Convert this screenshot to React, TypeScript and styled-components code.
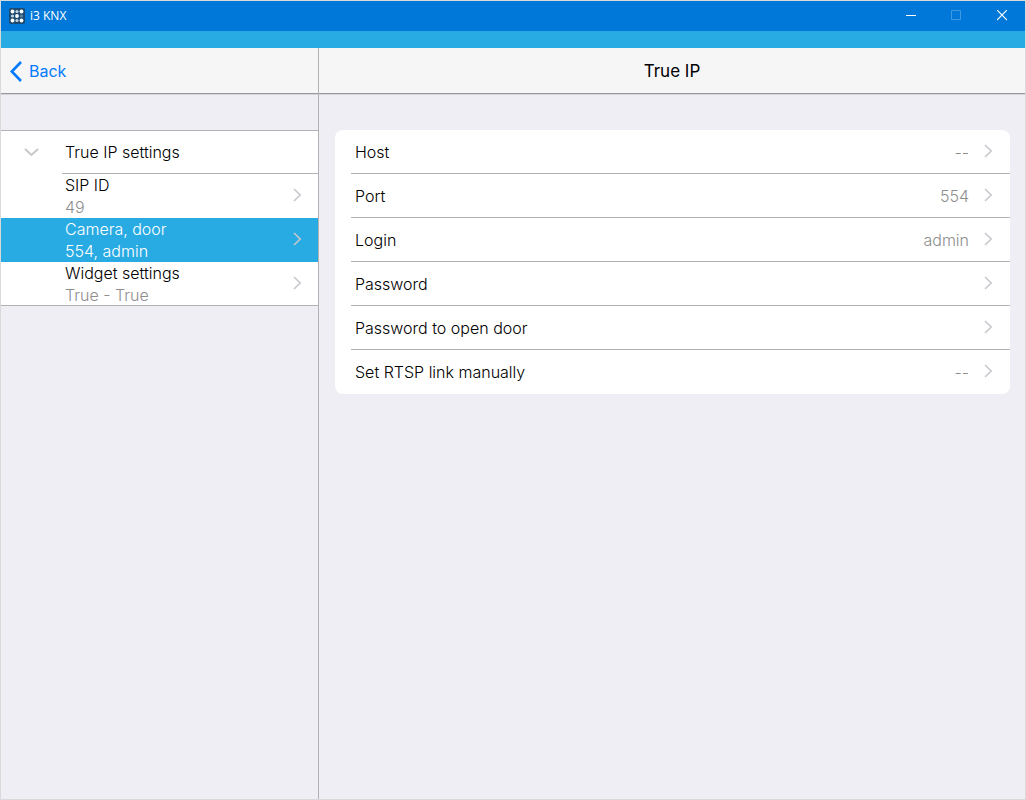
import React from "react";
import styled, { createGlobalStyle } from "styled-components";

const GlobalStyle = createGlobalStyle`
  *, *::before, *::after { box-sizing: border-box; }
  body { margin: 0; background: #efeef4; }
  button { font: inherit; color: inherit; border: 0; padding: 0; margin: 0; background: none; text-align: left; cursor: pointer; }
  ul { list-style: none; margin: 0; padding: 0; }
`;

const Window = styled.div`
  display: flex;
  flex-direction: column;
  min-height: 100vh;
  border: 1px solid #d9d9da;
  background: #efeef4;
  color: #000;
  font-family: Inter, "Liberation Sans", sans-serif;
  font-weight: 300;
  font-size: 16px;
  line-height: 22px;
`;

const TitleBar = styled.header`
  display: flex;
  align-items: center;
  height: 30px;
  padding-left: 8px;
  background: #0078d9;
  color: #fff;
`;

const AppName = styled.span`
  flex: 1;
  margin-left: 5px;
  font-family: "Open Sans", "Noto Sans", sans-serif;
  font-size: 12px;
  font-weight: 400;
  line-height: 16px;
`;

const WindowButton = styled.button`
  display: flex;
  align-items: center;
  justify-content: center;
  width: 46px;
  height: 30px;
  &:disabled { opacity: 0.25; cursor: default; }
`;

const StatusStrip = styled.div`
  height: 17px;
  background: #28aae3;
`;

const Body = styled.div`
  flex: 1;
  display: grid;
  grid-template-columns: 318px 1fr;
`;

const Sidebar = styled.nav`
  border-right: 1px solid #b2b2b4;
`;

const NavBar = styled.div<{ $centered?: boolean }>`
  display: flex;
  align-items: center;
  justify-content: ${(p) => (p.$centered ? "center" : "flex-start")};
  height: 46px;
  padding: 0 8px;
  border-bottom: 1px solid #999;
  box-shadow: 0 1px 0 #d5d5d8;
  background: #f6f6f6;
`;

const BackButton = styled.button`
  display: flex;
  align-items: center;
  gap: 6px;
  color: #007aff;
  font-weight: 400;
`;

const Title = styled.h1`
  margin: 0;
  font-size: 17px;
  font-weight: 400;
`;

const Group = styled.section`
  margin-top: 36px;
  border: solid #b2b2b4;
  border-width: 1px 0;
  background: #fff;
`;

const GroupHeader = styled.button`
  display: flex;
  align-items: center;
  width: 100%;
  height: 43px;
`;

const Disclosure = styled.span`
  display: flex;
  justify-content: center;
  width: 61px;
`;

const GroupName = styled.span`
  flex: 1;
  align-self: stretch;
  padding: 10px 3px;
  border-bottom: 1px solid #b2b2b4;
`;

const SideItem = styled.button<{ $selected: boolean }>`
  display: flex;
  align-items: center;
  width: 100%;
  height: 44px;
  padding: 0 15px 0 64px;
  background: ${(p) => (p.$selected ? "#28aae3" : "#fff")};
  color: ${(p) => (p.$selected ? "#fff" : "#000")};
  li:last-child > & { height: 43px; }
`;

const ItemText = styled.span`
  display: flex;
  flex: 1;
  flex-direction: column;
`;

const Detail = styled.span<{ $selected: boolean }>`
  color: ${(p) => (p.$selected ? "#fff" : "#8e8e8e")};
`;

const Card = styled.ul`
  margin: 36px 15px 0 16px;
  border-radius: 8px;
  background: #fff;
`;

const CardItem = styled.li`
  padding-left: 16px;
`;

const Row = styled.button`
  display: flex;
  align-items: center;
  width: 100%;
  height: 44px;
  padding: 0 16px 0 4px;
  border-bottom: 1px solid #b2b2b4;
  li:last-child > & { border-bottom-color: transparent; }
`;

const Label = styled.span`
  flex: 1;
`;

const Value = styled.span`
  margin-right: 14px;
  color: #8e8e8e;
`;

const Chevron = () => (
  <svg width="11" height="16" viewBox="0 0 11 16" fill="none" stroke="#c7c7cc" strokeWidth="1.6" aria-hidden="true">
    <path d="M2 1l6.2 6L2 13" />
  </svg>
);

const sideItems = [
  { name: "SIP ID", detail: "49" },
  { name: "Camera, door", detail: "554, admin", selected: true },
  { name: "Widget settings", detail: "True - True" },
];

const settings = [
  { label: "Host", value: "--" },
  { label: "Port", value: "554" },
  { label: "Login", value: "admin" },
  { label: "Password", value: "" },
  { label: "Password to open door", value: "" },
  { label: "Set RTSP link manually", value: "--" },
];

const AppLogo = () => (
  <svg width="16" height="16" viewBox="0 0 16 16" aria-hidden="true">
    <rect width="16" height="16" rx="2" fill="#1d4a70" />
    {[3.5, 8, 12.5].map((y, r) =>
      [3.5, 8, 12.5].map((x, c) => (
        <circle
          key={`${r}${c}`}
          cx={x}
          cy={y}
          r={(r + c) % 2 === 0 ? 1.9 : 1.6}
          fill={(r === 1 && c === 2) ? "#5f87a5" : (r + c) % 2 === 0 ? "#fff" : "#c3d3df"}
        />
      ))
    )}
  </svg>
);

export default function App() {
  return (
    <>
      <GlobalStyle />
      <Window>
        <TitleBar>
          <AppLogo />
          <AppName>i3 KNX</AppName>
          <WindowButton aria-label="Minimize">
            <svg width="12" height="12" stroke="#fff"><path d="M2 5.5h10" /></svg>
          </WindowButton>
          <WindowButton aria-label="Maximize" disabled>
            <svg width="10" height="12" stroke="#fff" fill="none"><path d="M.5.5h9v9h-9z" /></svg>
          </WindowButton>
          <WindowButton aria-label="Close">
            <svg width="10" height="12" stroke="#fff" strokeWidth="1.2"><path d="M0 0l10 10M10 0L0 10" /></svg>
          </WindowButton>
        </TitleBar>
        <StatusStrip />
        <Body>
          <Sidebar>
            <NavBar>
              <BackButton>
                <svg width="14" height="22" viewBox="0 0 14 22" fill="none" stroke="#007aff" strokeWidth="2.6" aria-hidden="true">
                  <path d="M12 2L2.8 11.5l9.2 9.5" />
                </svg>
                Back
              </BackButton>
            </NavBar>
            <Group>
              <GroupHeader aria-expanded="true">
                <Disclosure>
                  <svg width="15" height="9" viewBox="0 0 15 9" fill="none" stroke="#c7c7cc" strokeWidth="2" aria-hidden="true">
                    <path d="M1 1l6.5 6L14 1" />
                  </svg>
                </Disclosure>
                <GroupName>True IP settings</GroupName>
              </GroupHeader>
              <ul>
                {sideItems.map((item) => (
                  <li key={item.name}>
                    <SideItem $selected={!!item.selected}>
                      <ItemText>
                        <span>{item.name}</span>
                        <Detail $selected={!!item.selected}>{item.detail}</Detail>
                      </ItemText>
                      <Chevron />
                    </SideItem>
                  </li>
                ))}
              </ul>
            </Group>
          </Sidebar>
          <main>
            <NavBar $centered>
              <Title>True IP</Title>
            </NavBar>
            <Card>
              {settings.map((s) => (
                <CardItem key={s.label}>
                  <Row>
                    <Label>{s.label}</Label>
                    <Value>{s.value}</Value>
                    <Chevron />
                  </Row>
                </CardItem>
              ))}
            </Card>
          </main>
        </Body>
      </Window>
    </>
  );
}
